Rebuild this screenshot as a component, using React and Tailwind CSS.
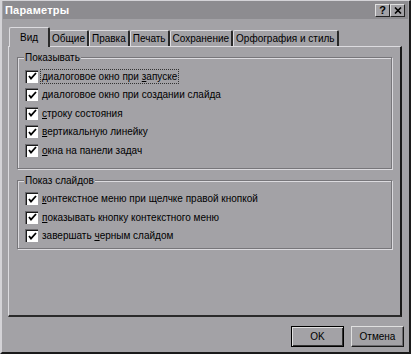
import React from "react";

const tabs = ["Вид", "Общие", "Правка", "Печать", "Сохранение", "Орфография и стиль"];

function Check({ pre = "", u, post = "", focus = false }) {
  return (
    <div className="flex items-center h-[18.5px]">
      <div className="w-[13px] h-[13px] bg-white border-t border-l border-[#6b6a6e] shadow-[inset_1px_1px_0_#1a1a1a] flex items-center justify-center ml-[7px]">
        <svg width="9" height="9" viewBox="0 0 9 9">
          <path d="M1 4 L3 6.5 L8 1" stroke="#000" strokeWidth="1.8" fill="none" />
        </svg>
      </div>
      <span
        className={`ml-[3px] px-[1px] leading-[13px] ${
          focus ? "outline outline-1 outline-dotted outline-[#333]" : ""
        }`}
      >
        {pre}
        <span className="underline">{u}</span>
        {post}
      </span>
    </div>
  );
}

function Group({ title, className = "", children }) {
  return (
    <div
      className={`relative border border-[#77767a] shadow-[1px_1px_0_#dcdbdf,inset_1px_1px_0_#dcdbdf] pt-[9px] ${className}`}
    >
      <span className="absolute -top-[8px] left-[6px] bg-[#a3a2a6] px-[1px] leading-[15px]">{title}</span>
      {children}
    </div>
  );
}

export default function App() {
  return (
    <div
      className="w-[411px] h-[354px] bg-[#a3a2a6] text-[10px] text-black overflow-hidden border-l-2 border-t border-r-2 border-b-2 border-l-[#d4d3d7] border-t-[#d4d3d7] border-r-[#1a1a1a] border-b-[#1a1a1a] flex flex-col"
      style={{ fontFamily: '"Liberation Sans", Arial, sans-serif' }}
    >
      {/* Title bar */}
      <div className="h-[18px] mx-[1px] bg-[#8d8c90] flex items-center justify-between pl-[2px] pr-[3px]">
        <span className="text-white font-bold text-[11px] tracking-[0.2px]">Параметры</span>
        <div className="flex gap-0">
          <div className="w-[15px] h-[13px] bg-[#a3a2a6] border border-t-[#e0e0e0] border-l-[#e0e0e0] border-r-[#222] border-b-[#222] flex items-center justify-center font-bold text-[11px] leading-none">
            ?
          </div>
          <div className="w-[15px] h-[13px] bg-[#a3a2a6] border border-t-[#e0e0e0] border-l-[#e0e0e0] border-r-[#222] border-b-[#222] flex items-center justify-center">
            <svg width="8" height="7" viewBox="0 0 8 7">
              <path d="M1 0.5 L7 6.5 M7 0.5 L1 6.5" stroke="#000" strokeWidth="1.6" />
            </svg>
          </div>
        </div>
      </div>

      {/* Tabs */}
      <div className="flex items-end pl-[7px] mt-[8px] h-[19px]">
        {tabs.map((t, i) => (
          <div
            key={t}
            className={`${
              i === 0
                ? "h-[20px] px-[10px] -mr-[1px] relative z-10 bg-[#a3a2a6] -mb-[1px]"
                : "h-[16px] px-[2px]"
            } flex items-center border-t border-l border-t-[#dcdbdf] border-l-[#dcdbdf] border-r-2 border-r-[#2a2a2a] rounded-t-[2px] leading-none`}
          >
            {t}
          </div>
        ))}
      </div>

      {/* Panel */}
      <div className="mx-[6px] mr-[7px] h-[271px] border-t border-l border-t-[#dcdbdf] border-l-[#dcdbdf] border-r-2 border-b-2 border-r-[#1a1a1a] border-b-[#2a2a2a] px-[8px] pt-[10px]">
        <Group title="Показывать" className="pb-[8px]">
          <Check pre="диалоговое окно при " u="з" post="апуске" focus />
          <Check pre="диалоговое окно при создании слай" u="д" post="а" />
          <Check u="с" post="троку состояния" />
          <Check u="в" post="ертикальную линейку" />
          <Check u="о" post="кна на панели задач" />
        </Group>
        <Group title="Показ слайдов" className="mt-[11px] pt-[8px] pb-[3px]">
          <Check u="к" post="онтекстное меню при щелчке правой кнопкой" />
          <Check u="п" post="оказывать кнопку контекстного меню" />
          <Check pre="завершать " u="ч" post="ерным слайдом" />
        </Group>
      </div>

      {/* Buttons */}
      <div className="flex justify-end gap-[7px] mt-[9px] pr-[5px]">
        <button className="w-[53px] h-[21px] bg-[#a3a2a6] border border-black shadow-[inset_1px_1px_0_#e0e0e0,inset_-1px_-1px_0_#333] text-[10px]">
          OK
        </button>
        <button className="w-[53px] h-[21px] bg-[#a3a2a6] border border-t-[#e0e0e0] border-l-[#e0e0e0] border-r-[#1a1a1a] border-b-[#1a1a1a] shadow-[inset_-1px_-1px_0_#6b6a6e] text-[10px]">
          Отмена
        </button>
      </div>
    </div>
  );
}
